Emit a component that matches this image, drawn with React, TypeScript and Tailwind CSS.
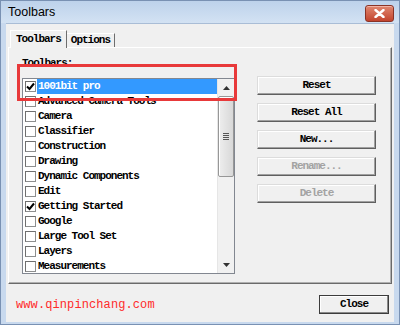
import { useState } from 'react';

const toolbars: { name: string; checked?: boolean }[] = [
  { name: '1001bit pro', checked: true },
  { name: 'Advanced Camera Tools' },
  { name: 'Camera' },
  { name: 'Classifier' },
  { name: 'Construction' },
  { name: 'Drawing' },
  { name: 'Dynamic Components' },
  { name: 'Edit' },
  { name: 'Getting Started', checked: true },
  { name: 'Google' },
  { name: 'Large Tool Set' },
  { name: 'Layers' },
  { name: 'Measurements' },
];

const mono = "font-['Liberation_Mono',monospace] text-[11px] tracking-[-1px] font-semibold";

function Check() {
  return (
    <svg width="9" height="9" viewBox="0 0 9 9">
      <path d="M1 4.5 L3.5 7 L8 1.5" fill="none" stroke="#000" strokeWidth="2" />
    </svg>
  );
}

function DlgButton({ label, disabled }: { label: string; disabled?: boolean }) {
  return (
    <button
      className={`h-[19px] w-[119px] border border-[#dcdcdc] border-r-[#5f5f5f] border-b-[#5f5f5f] bg-[#f0f0f0] leading-[17px] shadow-[inset_-1px_-1px_0_#a0a0a0,inset_1px_1px_0_#fff] ${mono} ${
        disabled ? 'text-[#a3a3a3]' : 'text-black'
      }`}
    >
      {label}
    </button>
  );
}

export default function App() {
  const [selected] = useState(0);

  return (
    <div className="relative flex h-[325px] w-[400px] flex-col border border-[#7991b3] bg-[#c8d9ee]">
      {/* Title bar */}
      <div className="flex h-[22px] shrink-0 items-start bg-gradient-to-b from-[#bdd2eb] to-[#d3e2f3] pl-[7px] pr-[5px]">
        <span className="mt-[4px] font-['Liberation_Sans',sans-serif] text-[12.5px] leading-[14px] text-black">
          Toolbars
        </span>
        <div className="ml-auto mt-[4px] flex h-[17px] w-[29px] items-center justify-center rounded-[3px] border border-[#8a3326] bg-gradient-to-b from-[#e0866f] to-[#c2432d] shadow-[inset_0_1px_0_#f3b2a3]">
          <svg width="11" height="9" viewBox="0 0 11 9">
            <path d="M1.5 1 L9.5 8 M9.5 1 L1.5 8" stroke="#fff" strokeWidth="2.4" strokeLinecap="round" />
          </svg>
        </div>
      </div>

      {/* Client area */}
      <div className="mx-[5px] flex h-[299px] flex-col border-t border-[#a9bdd6] bg-[#f0f0f0] pl-[2px] pt-[6px]">
        {/* Tabs */}
        <div className={`flex items-end pl-[2px] ${mono}`}>
          <div className="relative z-10 -mb-px h-[18px] border-l border-t border-l-white border-t-white border-r border-r-[#6e6e6e] bg-[#f0f0f0] px-[5px] leading-[16px] text-black">
            Toolbars
          </div>
          <div className="h-[14px] border-t border-r border-t-white border-r-[#6e6e6e] px-[4px] leading-[13px] text-black">
            Options
          </div>
        </div>

        {/* Panel */}
        <div className="flex h-[237px] w-[384px] border border-white border-r-[#6a6a6a] border-b-[#6a6a6a] pl-[13px] pt-[9px] shadow-[inset_-1px_-1px_0_#b0b0b0]">
          <div className="flex flex-col">
            <div className={`h-[12px] leading-[12px] text-black ${mono}`}>Toolbars:</div>
            <div className="mt-[9px] flex h-[196px] w-[213px] border border-[#828790] bg-white">
              <div className="flex w-[194px] flex-col overflow-hidden">
                {toolbars.map((t, i) => (
                  <div key={t.name} className={`flex h-[15px] shrink-0 items-center pl-[2px] ${mono}`}>
                    <div className="flex h-[11px] w-[11px] shrink-0 items-center justify-center border border-[#8e8f8f] border-t-[#6f6f6f] border-l-[#6f6f6f] bg-white">
                      {t.checked && <Check />}
                    </div>
                    <div
                      className={`ml-[1px] h-[15px] flex-1 pl-[1px] leading-[15px] whitespace-nowrap ${
                        i === selected ? 'bg-[#3399ff] text-white' : 'text-black'
                      }`}
                    >
                      {t.name}
                    </div>
                  </div>
                ))}
              </div>
              {/* Scrollbar */}
              <div className="flex w-[17px] flex-col border-l border-[#e6e6e6] bg-[#f1f1f1]">
                <div className="flex h-[17px] items-center justify-center">
                  <svg width="7" height="4" viewBox="0 0 7 4">
                    <path d="M0 4 L3.5 0 L7 4 Z" fill="#333" />
                  </svg>
                </div>
                <div className="flex h-[81px] items-center justify-center rounded-[2px] border border-[#979797] bg-gradient-to-r from-[#eeeeee] to-[#d8d8d8] shadow-[inset_1px_1px_0_#fff]">
                  <div className="flex flex-col gap-[1px]">
                    <div className="h-px w-[6px] bg-[#555]" />
                    <div className="h-px w-[6px] bg-[#555]" />
                    <div className="h-px w-[6px] bg-[#555]" />
                    <div className="h-px w-[6px] bg-[#555]" />
                  </div>
                </div>
                <div className="mt-auto flex h-[17px] items-center justify-center">
                  <svg width="7" height="4" viewBox="0 0 7 4">
                    <path d="M0 0 L3.5 4 L7 0 Z" fill="#333" />
                  </svg>
                </div>
              </div>
            </div>
          </div>

          <div className="ml-[22px] flex flex-col gap-[8px] pt-[19px]">
            <DlgButton label="Reset" />
            <DlgButton label="Reset All" />
            <DlgButton label="New..." />
            <DlgButton label="Rename..." disabled />
            <DlgButton label="Delete" disabled />
          </div>
        </div>

        {/* Bottom row */}
        <div className="mt-[10px] flex items-center pl-[8px] pr-[5px]">
          <span className="mt-[2px] font-['Liberation_Mono',monospace] text-[12px] tracking-[0.1px] text-[#ff2a2a]">
            www.qinpinchang.com
          </span>
          <button
            className={`ml-auto h-[19px] w-[70px] border border-[#3c3c3c] bg-[#f0f0f0] leading-[17px] text-black shadow-[inset_-1px_-1px_0_#8a8a8a,inset_1px_1px_0_#fff] ${mono}`}
          >
            Close
          </button>
        </div>
      </div>

      {/* Red annotation box */}
      <div className="absolute left-[16px] top-[63px] h-[37px] w-[220px] border-[3px] border-[#e8393a]" />
    </div>
  );
}
